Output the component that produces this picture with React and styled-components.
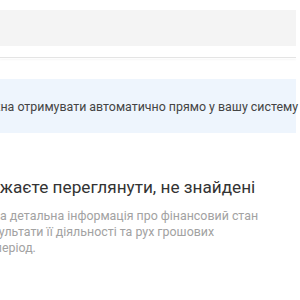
import React from "react";
import styled, { createGlobalStyle } from "styled-components";

const GlobalStyle = createGlobalStyle`
  html, body {
    margin: 0;
    padding: 0;
    background: #ffffff;
  }
  body {
    font-family: Roboto, "Noto Sans", "Liberation Sans", sans-serif;
  }
`;

const Page = styled.div`
  width: 300px;
  height: 300px;
  overflow: hidden;
  padding-top: 10px;
  box-sizing: border-box;
`;

const Column = styled.div`
  width: 296px;
  display: flex;
  flex-direction: column;
`;

const SearchBar = styled.div`
  height: 36px;
  background-color: #f4f4f4;
`;

const Divider = styled.div`
  margin-top: 11px;
  height: 1px;
  background-color: #e4e4e4;
  box-shadow: 0 2px 2px rgba(0, 0, 0, 0.05);
`;

const InfoBox = styled.div`
  margin-top: 21px;
  padding: 18px 0 16px;
  background-color: #eef5fd;
  color: #444444;
  font-size: 12.4px;
  line-height: 20px;
  white-space: nowrap;
`;

const Heading = styled.h2`
  margin: 42px 0 0;
  color: #333333;
  font-size: 17.2px;
  font-weight: 400;
  line-height: 24px;
  white-space: nowrap;
`;

const Description = styled.p`
  margin: 9px 0 0;
  color: #a2a2a2;
  font-size: 12.4px;
  line-height: 16px;
`;

const Line = styled.span`
  display: block;
  white-space: nowrap;
  margin-left: ${(p) => p.$shift || 0}px;
`;

function App() {
  return (
    <Page>
      <GlobalStyle />
      <Column>
        <SearchBar />
        <Divider />
        <InfoBox>
          <Line $shift={-25.2}>можна отримувати автоматично прямо у вашу систему</Line>
        </InfoBox>
        <Heading>
          <Line $shift={-19}>бажаєте переглянути, не знайдені</Line>
        </Heading>
        <Description>
          <Line>а детальна інформація про фінансовий стан</Line>
          <Line $shift={-21}>результати її діяльності та рух грошових</Line>
          <Line $shift={-5.2}>період.</Line>
        </Description>
      </Column>
    </Page>
  );
}

export default App;
